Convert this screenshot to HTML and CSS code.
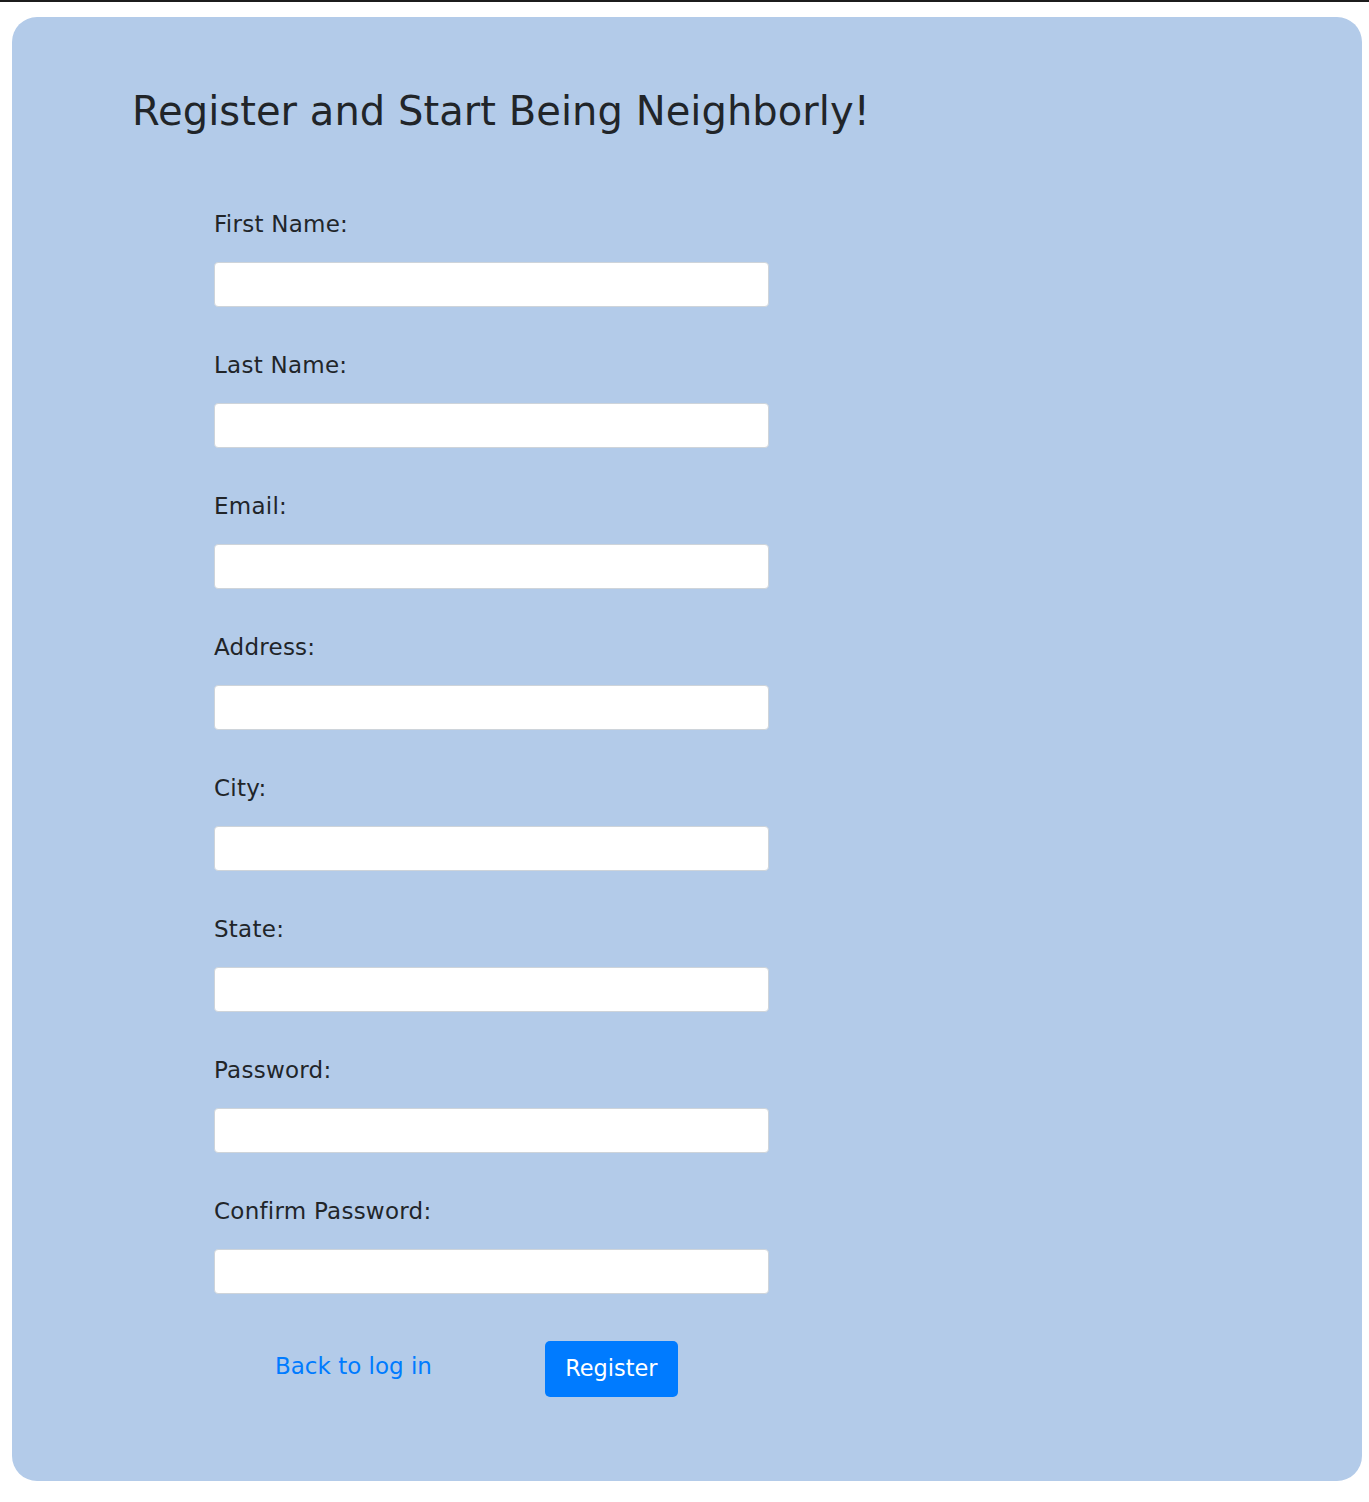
FILE: index.html
```
<!DOCTYPE html>
<html>
<head>
<meta charset="utf-8">
<title>Register</title>
<link rel="stylesheet" href="styles.css">
</head>
<body>
<div class="topline"></div>
<main class="card">
  <h1 class="title">Register and Start Being Neighborly!</h1>
  <form class="form">
    <div class="field"><label class="label">First Name:</label><input class="input" type="text"></div>
    <div class="field"><label class="label">Last Name:</label><input class="input" type="text"></div>
    <div class="field"><label class="label">Email:</label><input class="input" type="email"></div>
    <div class="field"><label class="label">Address:</label><input class="input" type="text"></div>
    <div class="field"><label class="label">City:</label><input class="input" type="text"></div>
    <div class="field"><label class="label">State:</label><input class="input" type="text"></div>
    <div class="field"><label class="label">Password:</label><input class="input" type="password"></div>
    <div class="field last"><label class="label">Confirm Password:</label><input class="input" type="password"></div>
    <div class="actions">
      <a class="back" href="#">Back to log in</a>
      <button class="btn" type="button">Register</button>
    </div>
  </form>
</main>
</body>
</html>
```
FILE: styles.css
```
html, body {
  margin: 0;
  padding: 0;
  background: #ffffff;
  font-family: "DejaVu Sans", sans-serif;
  color: #212529;
}
.topline {
  height: 2px;
  background: #1c1c1c;
}
.card {
  margin: 15px 7px 21px 12px;
  background: #b3cbe9;
  border-radius: 25px;
  padding: 70px 0 84px 117px;
}
.title {
  margin: 0 0 0 3px;
  font-size: 40px;
  font-weight: 400;
  line-height: 48px;
  letter-spacing: 0.05px;
  color: #212529;
}
.form {
  margin: 73px 0 0 85px;
  width: 555px;
}
.field {
  display: flex;
  flex-direction: column;
  margin-bottom: 42px;
}
.field.last {
  margin-bottom: 47px;
}
.label {
  font-size: 23px;
  line-height: 33px;
  letter-spacing: 0.25px;
  margin-bottom: 21px;
}
.input {
  box-sizing: border-box;
  width: 555px;
  height: 45px;
  margin: 0;
  border: 1px solid #ced4da;
  border-radius: 4px;
  background: #ffffff;
  font-family: "DejaVu Sans", sans-serif;
  font-size: 20px;
  padding: 6px 12px;
}
.actions {
  display: flex;
  align-items: flex-start;
}
.back {
  margin: 9px 0 0 61px;
  font-size: 23px;
  line-height: 33.6px;
  color: #007bff;
  text-decoration: none;
}
.btn {
  margin-left: 113px;
  box-sizing: border-box;
  width: 133px;
  height: 56px;
  padding: 0;
  border: none;
  border-radius: 5px;
  background: #007bff;
  color: #ffffff;
  font-family: "DejaVu Sans", sans-serif;
  font-size: 22.4px;
  line-height: 33.6px;
}
```
